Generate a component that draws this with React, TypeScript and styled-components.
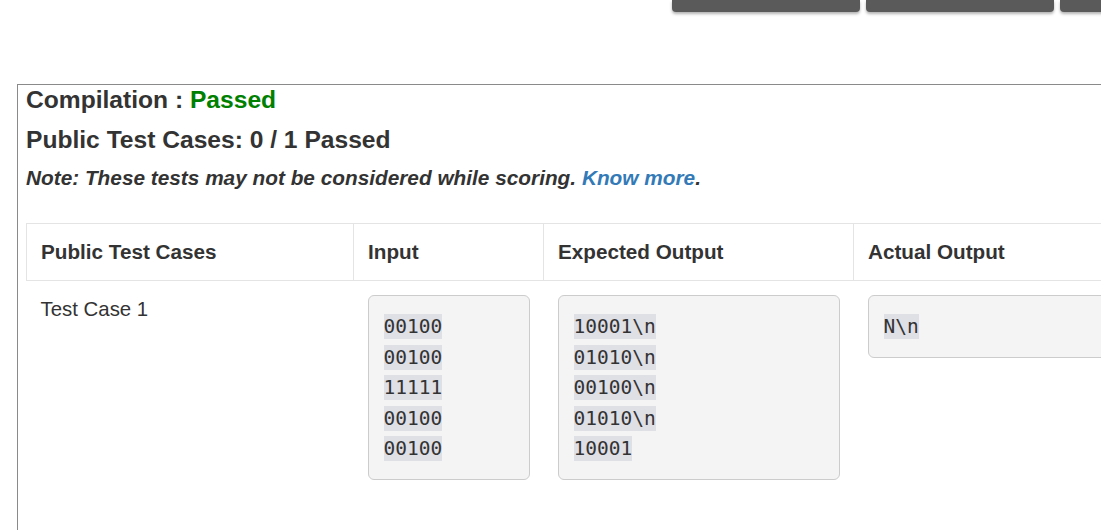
import React from 'react';
import styled, { createGlobalStyle } from 'styled-components';

const GlobalStyle = createGlobalStyle`
  html, body {
    margin: 0;
    padding: 0;
    background: #ffffff;
    overflow: hidden;
  }

  body {
    font-family: 'Liberation Sans', Arial, sans-serif;
    color: #333333;
  }
`;

const Page = styled.div`
  width: 1101px;
  height: 530px;
  overflow: hidden;
`;

const Toolbar = styled.div`
  display: flex;
  gap: 6px;
  height: 12px;
  padding-left: 672px;
  padding-bottom: 6px;
`;

const ToolButton = styled.div`
  flex: 0 0 188px;
  height: 12px;
  background: #5a5a5a;
  border-radius: 0 0 4px 4px;
  box-shadow: 0 2px 3px rgba(0, 0, 0, 0.3);
`;

const ResultPanel = styled.section`
  margin: 66px 0 0 17px;
  padding: 1px 0 0 8px;
  border-top: 1px solid #8a8a8a;
  border-left: 1px solid #8a8a8a;
  min-height: 460px;
`;

const Heading = styled.h3`
  margin: 0 0 12px;
  font-size: 24.6px;
  line-height: 28px;
  font-weight: 700;
  color: #333333;
`;

const Passed = styled.span`
  color: #008000;
`;

const Note = styled.p`
  margin: 0;
  font-size: 20.8px;
  line-height: 24px;
  font-weight: 700;
  font-style: italic;
  color: #333333;
`;

const Link = styled.a`
  color: #337ab7;
  text-decoration: none;
`;

const CasesTable = styled.table`
  margin-top: 33px;
  border-collapse: collapse;
  table-layout: fixed;
  width: 1127px;
`;

const HeaderCell = styled.th<{ $w: number }>`
  box-sizing: border-box;
  width: ${(p) => p.$w}px;
  padding: 14px;
  border: 1px solid #e4e4e4;
  text-align: left;
  font-size: 20.7px;
  line-height: 28px;
  font-weight: 700;
  color: #333333;
`;

const BodyCell = styled.td`
  box-sizing: border-box;
  padding: 14px;
  vertical-align: top;
  font-size: 20.4px;
  line-height: 28px;
  color: #333333;
`;

const CodeBox = styled.div`
  display: flex;
  flex-direction: column;
  align-items: flex-start;
  gap: 5.5px;
  padding: 18px 15px;
  background: #f4f4f4;
  border: 1px solid #cccccc;
  border-radius: 6px;
`;

const CodeLine = styled.code`
  display: inline-block;
  font-family: 'DejaVu Sans Mono', 'Liberation Mono', monospace;
  font-size: 19.5px;
  line-height: 25px;
  color: #333333;
  background: #dfdfe6;
  white-space: pre;
`;

interface TestCase {
  readonly name: string;
  readonly input: string[];
  readonly expected: string[];
  readonly actual: string[];
}

const cases: TestCase[] = [
  {
    name: 'Test Case 1',
    input: ['00100', '00100', '11111', '00100', '00100'],
    expected: ['10001\\n', '01010\\n', '00100\\n', '01010\\n', '10001'],
    actual: ['N\\n']
  }
];

const Code = ({ lines }: { lines: string[] }) => (
  <CodeBox>
    {lines.map((line, i) => (
      <CodeLine key={i}>{line}</CodeLine>
    ))}
  </CodeBox>
);

const App: React.FC = () => (
  <>
    <GlobalStyle />
    <Page>
      <Toolbar>
        <ToolButton />
        <ToolButton />
        <ToolButton />
      </Toolbar>

      <ResultPanel>
        <Heading>
          Compilation : <Passed>Passed</Passed>
        </Heading>
        <Heading>Public Test Cases: 0 / 1 Passed</Heading>
        <Note>
          Note: These tests may not be considered while scoring. <Link href="#">Know more</Link>.
        </Note>

        <CasesTable>
          <thead>
            <tr>
              <HeaderCell $w={327}>Public Test Cases</HeaderCell>
              <HeaderCell $w={190}>Input</HeaderCell>
              <HeaderCell $w={310}>Expected Output</HeaderCell>
              <HeaderCell $w={300}>Actual Output</HeaderCell>
            </tr>
          </thead>
          <tbody>
            {cases.map((c) => (
              <tr key={c.name}>
                <BodyCell>{c.name}</BodyCell>
                <BodyCell>
                  <Code lines={c.input} />
                </BodyCell>
                <BodyCell>
                  <Code lines={c.expected} />
                </BodyCell>
                <BodyCell>
                  <Code lines={c.actual} />
                </BodyCell>
              </tr>
            ))}
          </tbody>
        </CasesTable>
      </ResultPanel>
    </Page>
  </>
);

export default App;
